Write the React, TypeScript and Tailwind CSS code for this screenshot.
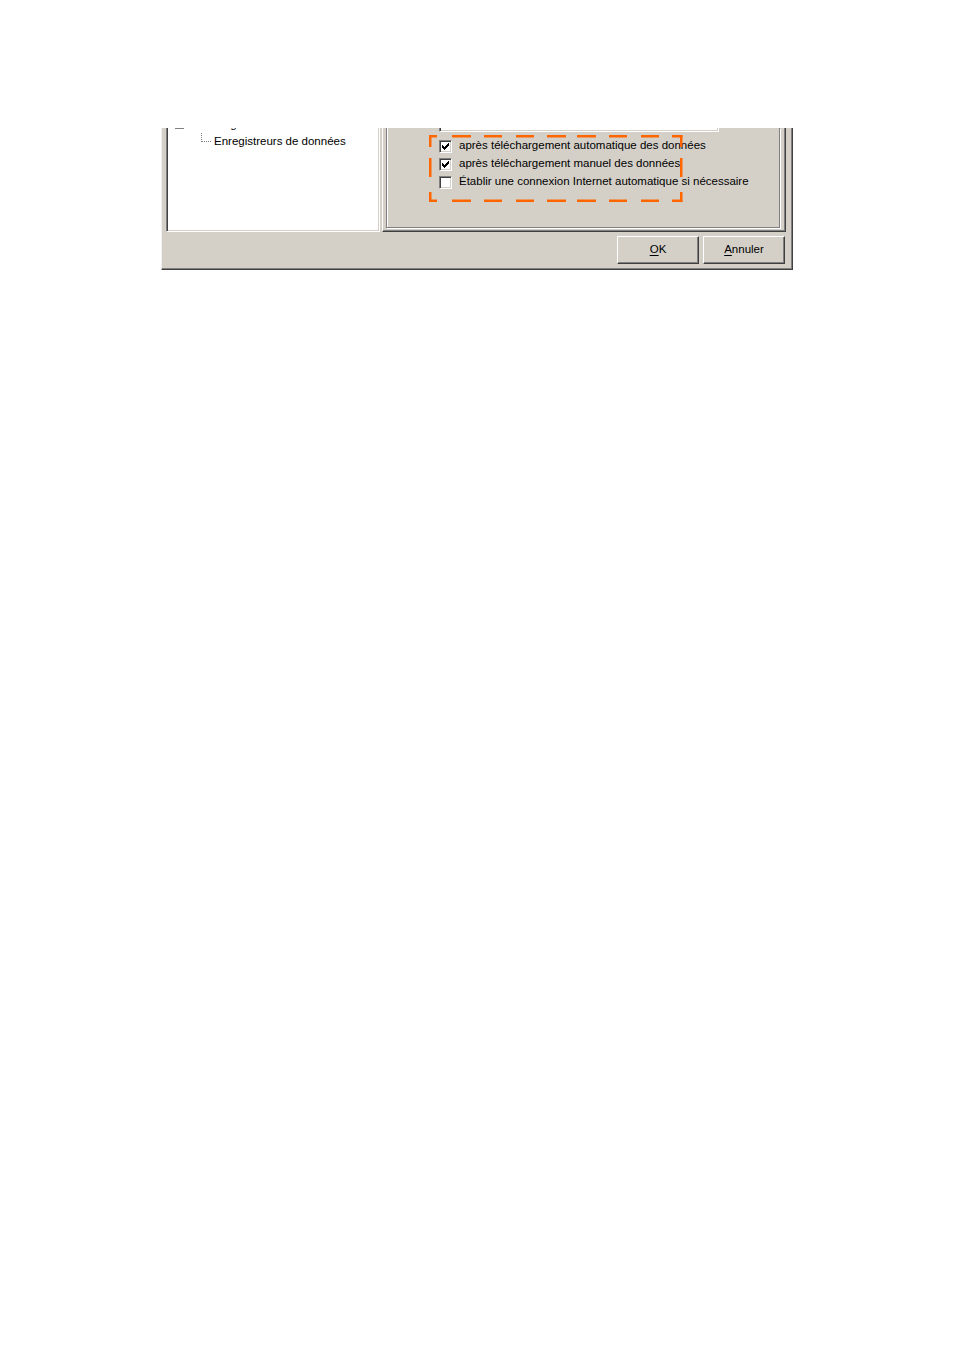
import React from "react";

const checkPixels: [number, number][] = [
  [3, 5], [3, 6], [3, 7],
  [4, 6], [4, 7], [4, 8],
  [5, 7], [5, 8], [5, 9],
  [6, 6], [6, 7], [6, 8],
  [7, 5], [7, 6], [7, 7],
  [8, 4], [8, 5], [8, 6],
  [9, 3], [9, 4], [9, 5],
];

function Checkbox({ checked }: { checked: boolean }) {
  return (
    <div className="relative w-[13px] h-[13px] shrink-0 bg-white border-t border-l border-t-[#808080] border-l-[#808080] border-r border-b border-r-white border-b-white shadow-[inset_1px_1px_0_#404040,inset_-1px_-1px_0_#d4d0c8]">
      {checked && (
        <svg className="absolute -left-px -top-px" width="13" height="13" viewBox="0 0 13 13" shapeRendering="crispEdges">
          {checkPixels.map(([x, y]) => (
            <rect key={`${x}-${y}`} x={x} y={y} width="1" height="1" fill="#000" />
          ))}
        </svg>
      )}
    </div>
  );
}

function Option({ checked, label }: { checked: boolean; label: string }) {
  return (
    <div className="flex items-center h-[18px] gap-[7px]">
      <Checkbox checked={checked} />
      <span className="whitespace-nowrap leading-none">{label}</span>
    </div>
  );
}

function Button({ children }: { children: React.ReactNode }) {
  return (
    <button className="w-[82px] h-[28px] bg-[#d4d0c8] border-t border-l border-t-white border-l-white border-r border-b border-r-[#404040] border-b-[#404040] shadow-[inset_-1px_-1px_0_#808080] text-[11.5px] text-black flex items-center justify-center leading-none">
      {children}
    </button>
  );
}

// annotation frame drawn over the dialog (page coordinates)
const hDashes: [number, number][] = [
  [429, 437], [452, 471], [484, 502], [516, 534], [547, 566],
  [577, 596], [609, 627], [641, 659], [672, 682.5],
];
const vDashes: [number, number][] = [[135, 147], [158, 177], [192, 202]];

function DashedFrame() {
  return (
    <svg className="absolute left-0 top-0 pointer-events-none" width="954" height="300">
      {hDashes.map(([a, b]) => (
        <React.Fragment key={`h${a}`}>
          <rect x={a} y={135} width={b - a} height={2.5} fill="#ff6600" />
          <rect x={a} y={199.5} width={b - a} height={2.5} fill="#ff6600" />
        </React.Fragment>
      ))}
      {vDashes.map(([a, b]) => (
        <React.Fragment key={`v${a}`}>
          <rect x={429} y={a} width={2.5} height={b - a} fill="#ff6600" />
          <rect x={680} y={a} width={2.5} height={b - a} fill="#ff6600" />
        </React.Fragment>
      ))}
    </svg>
  );
}

export default function App() {
  return (
    <div className="relative min-h-[1351px] bg-white pt-[128px] pl-[161px] font-['Liberation_Sans',Arial,sans-serif] text-[11.5px] text-black">
      <div className="w-[632px] h-[142px] bg-[#d4d0c8] border-l border-l-[#f0f0f0] border-r border-b border-r-[#404040] border-b-[#404040] shadow-[inset_-1px_-1px_0_#808080] flex flex-col">
        <div className="flex h-[104px] shrink-0 pl-[4px]">
          {/* tree view */}
          <div className="w-[214px] h-full bg-white border-l border-l-[#808080] border-r border-r-white border-b border-b-white shadow-[inset_1px_0_0_#404040,inset_-1px_-1px_0_#d4d0c8] overflow-hidden">
            <div className="-mt-[12px]">
              <div className="flex items-center h-[17px] pl-[8px] gap-[11px]">
                <div className="relative w-[9px] h-[9px] border border-[#808080] bg-white">
                  <div className="absolute left-[1px] top-[3px] w-[5px] h-px bg-black" />
                </div>
                <span className="whitespace-nowrap leading-none">Stockage des données</span>
              </div>
              <div className="relative flex items-center h-[17px] pl-[47px]">
                <div className="absolute left-[34px] top-0 w-[10px] h-[9px] border-l border-b border-dotted border-[#808080]" />
                <span className="whitespace-nowrap leading-none">Enregistreurs de données</span>
              </div>
            </div>
          </div>

          {/* property page */}
          <div className="ml-[2px] w-[404px] h-full border-l border-l-white border-r border-b border-r-[#404040] border-b-[#404040] shadow-[inset_-1px_-1px_0_#808080] pl-[3px]">
            <div className="w-[394px] h-[100px] border border-t-0 border-[#808080] shadow-[inset_1px_0_0_#fff,1px_1px_0_#fff]">
              <div className="ml-[52px] w-[280px] h-[4px] bg-white border-l border-l-[#808080] border-r border-r-white border-b border-b-white shadow-[inset_1px_0_0_#404040,inset_-1px_-1px_0_#d4d0c8]" />
              <div className="mt-[5px] pl-[52px] flex flex-col">
                <Option checked label="après téléchargement automatique des données" />
                <Option checked label="après téléchargement manuel des données" />
                <Option checked={false} label="Établir une connexion Internet automatique si nécessaire" />
              </div>
            </div>
          </div>
        </div>

        <div className="flex-1 flex justify-end items-start pt-[4px] pr-[7px] gap-[4px]">
          <Button>
            <span className="underline underline-offset-2">O</span>K
          </Button>
          <Button>
            <span className="underline underline-offset-2">A</span>nnuler
          </Button>
        </div>
      </div>
      <DashedFrame />
    </div>
  );
}
